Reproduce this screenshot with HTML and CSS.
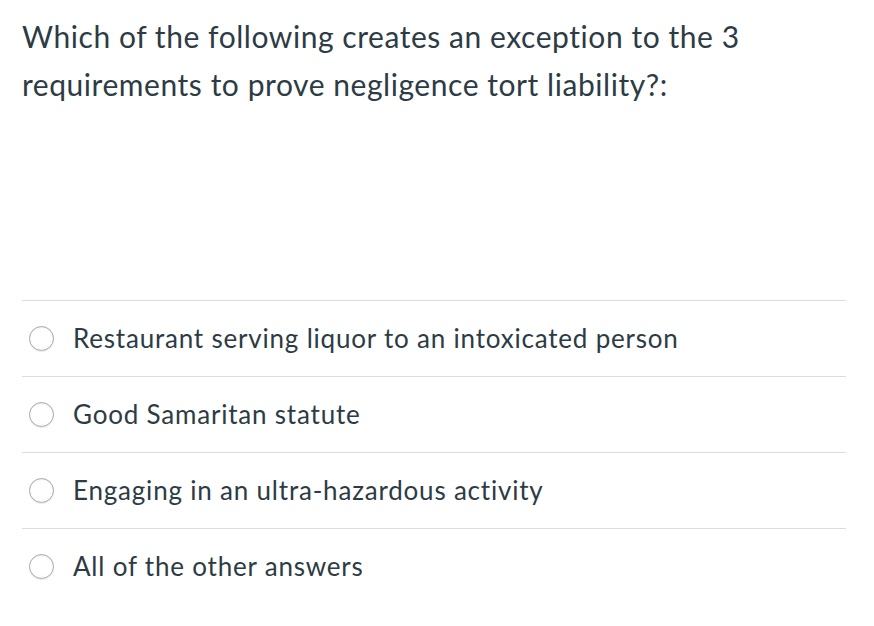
FILE: index.html
```html
<!DOCTYPE html>
<html>
<head>
<meta charset="utf-8">
<link rel="stylesheet" href="styles.css">
</head>
<body>
<div class="question">
  <p class="prompt">Which of the following creates an exception to the 3 requirements to prove negligence tort liability?:</p>
  <ul class="answers">
    <li class="answer"><span class="radio"></span><span class="label">Restaurant serving liquor to an intoxicated person</span></li>
    <li class="answer"><span class="radio"></span><span class="label">Good Samaritan statute</span></li>
    <li class="answer"><span class="radio"></span><span class="label">Engaging in an ultra-hazardous activity</span></li>
    <li class="answer"><span class="radio"></span><span class="label">All of the other answers</span></li>
  </ul>
</div>
</body>
</html>
```
FILE: styles.css
```css
html, body {
  margin: 0;
  padding: 0;
  background: #ffffff;
}
body {
  font-family: Lato, "Open Sans", sans-serif;
  color: #2d3b45;
}
.question {
  padding: 12px 28px 0 22px;
}
.prompt {
  margin: 0;
  font-size: 30px;
  letter-spacing: 0.55px;
  line-height: 48px;
  width: 780px;
}
.answers {
  list-style: none;
  margin: 192px 0 0 0;
  padding: 0;
}
.answer {
  display: flex;
  align-items: center;
  height: 75px;
  border-top: 1px solid #dcdcdc;
  padding-left: 7px;
}
.radio {
  box-sizing: border-box;
  width: 25px;
  height: 25px;
  border-radius: 50%;
  border: 1px solid #a9a9a9;
  background: radial-gradient(circle at 50% 40%, #ffffff 60%, #f0f0f0 100%);
  box-shadow: inset 0 1px 1px rgba(0,0,0,0.08), 0 1px 1px rgba(0,0,0,0.08);
  flex: none;
}
.label {
  margin-left: 19px;
  font-size: 26px;
  letter-spacing: 0.8px;
  line-height: 1;
  padding-bottom: 1px;
}
```
